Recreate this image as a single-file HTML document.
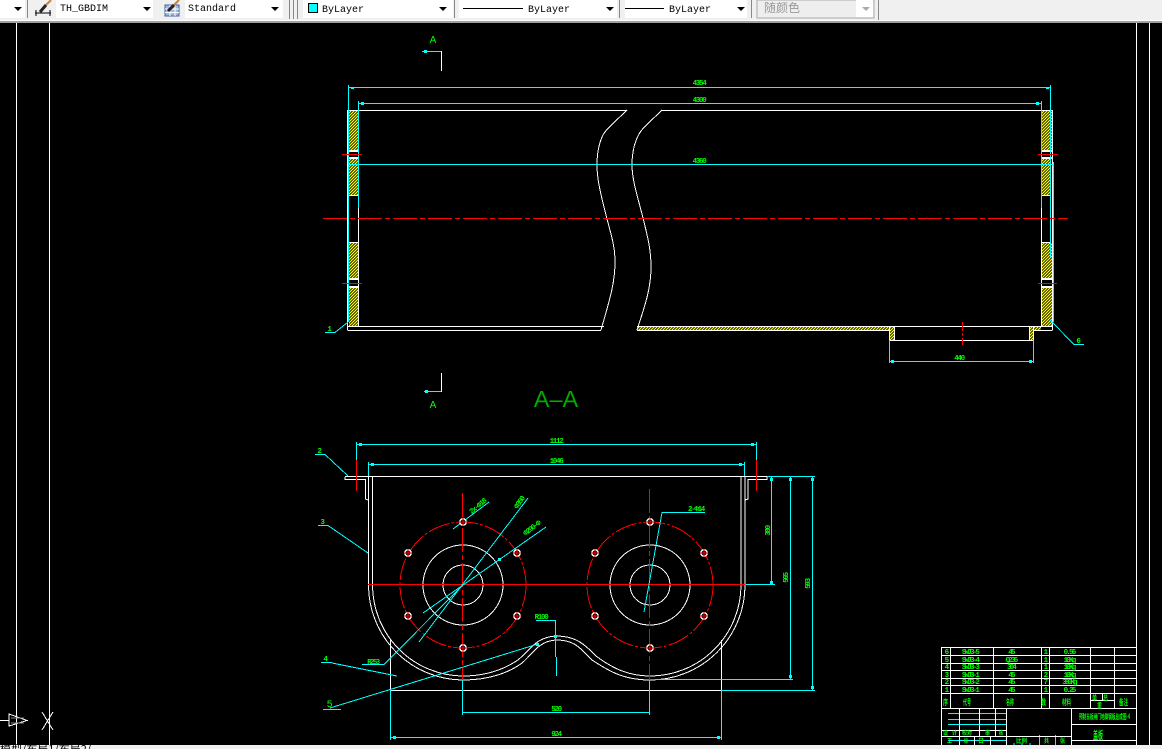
<!DOCTYPE html>
<html lang="zh"><head><meta charset="utf-8"><title>CAD</title>
<style>
html,body{margin:0;padding:0;background:#000;width:1162px;height:749px;overflow:hidden}
svg{display:block}
.t{font-family:"Liberation Mono","Noto Sans CJK SC",monospace;font-size:10px;fill:#000}
.g{font-family:"Liberation Mono",monospace;font-size:7.500px;font-weight:bold;fill:#0f0;text-anchor:middle;letter-spacing:-1.300px}
.s{font-family:"Liberation Mono",monospace;font-size:7.500px;font-weight:bold;fill:#0f0;text-anchor:middle;letter-spacing:-1.800px}
.k{font-family:"Noto Sans CJK SC",sans-serif;font-size:8px;font-weight:bold;fill:#0f0}
.w{stroke:#fff;fill:none}
.c{stroke:#0ff;fill:none}
.r{stroke:#f00;fill:none}
</style></head><body>
<svg width="1162" height="749" viewBox="0 0 1162 749" xmlns="http://www.w3.org/2000/svg">
<defs>
<pattern id="h" width="3" height="3" patternUnits="userSpaceOnUse"><rect width="3" height="3" fill="#000"/><path d="M0 3L3 0M-1 1L1 -1M2 4L4 2" stroke="#ff0" stroke-width="1.300"/></pattern>
</defs>
<!-- toolbar -->
<rect width="1162" height="23" fill="#f0f0f0"/>
<rect y="20" width="1162" height="1" fill="#fff"/>
<rect y="21" width="1162" height="2" fill="#a0a0a0"/>
<g fill="#fff">
<rect x="0" y="0" width="25" height="18"/><rect x="56" y="0" width="97" height="18"/><rect x="185" y="0" width="98" height="18"/><rect x="303" y="0" width="150" height="18"/><rect x="459" y="0" width="158" height="18"/><rect x="625" y="0" width="122" height="18"/>
</g>
<rect x="757" y="0" width="117" height="18" fill="#eee" stroke="#aaa"/>
<rect x="856" y="0" width="17" height="17" fill="#fff"/>
<g fill="#888"><rect x="27" y="0" width="1" height="18"/><rect x="289" y="0" width="1" height="19"/><rect x="293" y="0" width="1" height="19"/><rect x="297" y="0" width="1" height="19"/><rect x="454" y="0" width="1" height="18"/><rect x="619" y="0" width="1" height="18"/><rect x="751" y="0" width="1" height="18"/><rect x="878" y="0" width="1" height="20"/></g>
<g fill="#000">
<path d="M14 7h8l-4 4z"/><path d="M143 7h8l-4 4z"/><path d="M271 7h8l-4 4z"/><path d="M439 7h8l-4 4z"/><path d="M606 7h8l-4 4z"/><path d="M737 7h8l-4 4z"/>
</g>
<path d="M862 7h8l-4 4z" fill="#aaa"/>
<!-- dim style icon -->
<path d="M35 13H51M36 10V16M50 10V16" stroke="#000" fill="none"/>
<path d="M40 12L46 5" stroke="#222" stroke-width="3"/><path d="M46 5L51 0" stroke="#d08030" stroke-width="2"/>
<!-- table style icon -->
<rect x="165" y="5" width="14" height="11" fill="#9fb8e0" stroke="#4060a0"/>
<path d="M165 9H179M165 12.500H179M170 5V16M175 5V16" stroke="#fff"/>
<path d="M168 11L174 5" stroke="#222" stroke-width="3"/><path d="M174 5L179 0" stroke="#d08030" stroke-width="2"/>
<text class="t" x="60" y="11">TH_GBDIM</text>
<text class="t" x="188" y="11">Standard</text>
<rect x="308.500" y="3.500" width="9" height="9" fill="#0ff" stroke="#000"/>
<text class="t" x="322" y="12">ByLayer</text>
<path d="M463 8.500H523M625 8.500H664" stroke="#000"/>
<text class="t" x="528" y="12">ByLayer</text>
<text class="t" x="669" y="12">ByLayer</text>
<text x="764" y="12" style="font-family:'Noto Sans CJK SC',sans-serif;font-size:12px;fill:#999">随颜色</text>

<g shape-rendering="crispEdges" stroke-width="1">
<!-- outer frame -->
<path class="w" d="M16.500 23V745M49.500 23V745M1136.500 23V745M1149.500 23V745"/>
<!-- UCS -->
<path class="w" d="M0 720.500H9M9 714V726L27 720.500Z"/>
<path d="M11 718H24M11 723H24" stroke="#888" fill="none"/>
<path class="w" d="M42 712L53 730M53 712L42 730"/>

<!-- section marks -->
<path class="c" d="M422 51.500H441"/><path class="w" d="M441.500 51V71M441.500 373V392"/><path class="c" d="M424 391.500H441"/>
<rect x="424" y="50" width="3" height="3" fill="#0ff"/><rect x="425" y="390" width="3" height="3" fill="#0ff"/>
</g>
<text x="433" y="43" style="font-family:'Liberation Sans',sans-serif;font-size:10px;fill:#0f0;text-anchor:middle">A</text>
<text x="433" y="408" style="font-family:'Liberation Sans',sans-serif;font-size:10px;fill:#0f0;text-anchor:middle">A</text>
<text x="556" y="407" style="font-family:'Liberation Sans',sans-serif;font-size:23.500px;fill:#0a0;text-anchor:middle">A–A</text>

<!-- upper view -->
<g shape-rendering="crispEdges">
<g fill="url(#h)">
<rect x="349" y="111" width="9" height="40"/><rect x="349" y="158" width="9" height="37"/><rect x="349" y="243" width="9" height="36"/><rect x="349" y="288" width="9" height="38"/>
<rect x="1042" y="111" width="10" height="40"/><rect x="1042" y="158" width="8" height="37"/><rect x="1042" y="243" width="10" height="36"/><rect x="1042" y="288" width="10" height="38"/>
<rect x="637" y="327" width="252" height="3"/><rect x="890" y="327" width="4" height="13"/><rect x="1029" y="327" width="4" height="13"/><rect x="1033" y="327" width="8" height="3"/>
</g>
<path class="w" d="M347.500 110V330.500M358.500 208V326M1041.500 208V326M1052.500 110V330.500"/>
<path class="w" d="M347 110.500H627M662 110.500H1052M348 326.500H604M348 330.500H601M637 326.500H1052M637 330.500H890M1033 330.500H1052"/>
<path class="w" stroke-width="2" d="M348 151H358M348 158H358M348 279H358M348 287H358M1042 151H1052M1042 158H1052M1042 279H1052M1042 287H1052"/>
<path class="w" d="M348 195.500H358M348 242.500H358M1042 195.500H1050M1042 242.500H1050"/>
<path class="w" d="M894.500 326V340M1029.500 326V340M889.500 326V340M1033.500 326V340M890 340.500H1033"/>
<path class="w" d="M627 110C615 122 607 128 603 135C598 145 597 155 597 165C597 180 601 195 606 215C611 235 615 245 615 262C615 285 608 305 601 330"/>
<path class="w" d="M662 110C650 122 643 127 639 134C634 143 632 155 632 165C632 180 638 198 643 218C648 238 651 250 651 267C651 290 644 308 637 330"/>
<path class="c" d="M348.500 85V322M358.500 101V208M1050.500 85V257M1041.500 101V208M1053.500 162V322M889.500 340V363M1033.500 340V363"/>
<path class="c" d="M349 87.500H1050M359 103.500H1041M349 164.500H1053M890 361.500H1033"/>
<path class="c" d="M348 322L335 332.500H325M1050 320L1074 344.500H1084"/>
<path class="r" d="M323 218.500H1068" stroke-dasharray="24 3 5 3"/>
<path class="r" d="M342 154.500H362M342 283.500H362M1038 154.500H1058M1038 283.500H1057"/>
<path class="r" d="M962.500 322V345" stroke-dasharray="9 2 3 2"/>
<g fill="#0ff"><rect x="351" y="87" width="3" height="2"/><rect x="361" y="102" width="3" height="3"/><rect x="1046" y="87" width="3" height="2"/><rect x="1036" y="102" width="3" height="3"/><rect x="891" y="360" width="3" height="3"/><rect x="1029" y="360" width="3" height="3"/></g>
</g>
<text class="g" x="699" y="85">4354</text>
<text class="g" x="699" y="102">4300</text>
<text class="g" x="699" y="163">4360</text>
<text class="g" x="959" y="360">440</text>
<text class="g" x="329" y="331">1</text>
<text class="g" x="1078" y="343">6</text>

<!-- lower view -->
<g shape-rendering="crispEdges">
<path class="w" d="M345 476.500H767"/>
<path class="w" d="M345 477V479.500H365.500V499L368 500M767 477V479.500H748V499L745 500"/>
<path class="w" d="M368.500 476V585A95 95 0 0 0 463 680C490 680 510 672 522 663C532 655 538 641 556 640C575 640 580 648 592 660C610 672 625 680 650 680A95 95 0 0 0 745 585V476"/>
<path class="w" d="M372.500 476V585A91 91 0 0 0 463 676C488 676 506 668 518 660C530 650 536 637 556 636C576 636 584 644 596 656C612 668 628 676 650 676A91 91 0 0 0 741 585V476"/>
<circle class="w" cx="463" cy="585" r="40"/><circle class="w" cx="463" cy="585" r="20"/>
<circle class="w" cx="650" cy="585" r="40"/><circle class="w" cx="650" cy="585" r="20"/>
<circle class="r" cx="463" cy="585" r="63" stroke-dasharray="22 2 3 2"/>
<circle class="r" cx="650" cy="585" r="63" stroke-dasharray="22 2 3 2"/>
<path class="r" d="M368 584.500H745"/>
<path class="r" d="M462.500 493V680M649.500 489V680" stroke-dasharray="24 3 5 3"/>
<path class="r" d="M356.500 460V491M756.500 460V491"/>
<path class="w" d="M390.500 640V690M721.500 640V690M390 690.500H721"/>
<path class="c" d="M721 690.500H815M746 584.500H775M767 476.500H815M655 679.500H793"/>
<path class="c" d="M771.500 476V585M790.500 476V679M812.500 476V690"/>
<path class="c" d="M356.500 442V460M756.500 442V460M368.500 462V476M744.500 462V476M356 444.500H756M368 464.500H744"/>
<path class="c" d="M462.500 680V715M649.500 680V715M463 712.500H649M390.500 690V740M721.500 690V740M390 737.500H721"/>
<path class="c" d="M315 454.500H325M325 454.500L348 476M318 525.500H328M328 525.500L368 553M321 662.500H332M332 663L397 676M323 709.500H341M330 708L538 644M362 664.500H384L463 585M423 613L546 527M419 642L528 498M453 529L489 502M536 620.500H555M555.500 620V657M556.500 657V676M705 512.500H662L644 612"/>
<g fill="#0ff"><rect x="359" y="443" width="3" height="3"/><rect x="371" y="463" width="3" height="3"/><rect x="751" y="443" width="3" height="3"/><rect x="739" y="463" width="3" height="3"/><rect x="393" y="736" width="3" height="3"/><rect x="717" y="736" width="3" height="3"/><rect x="770" y="478" width="3" height="3"/><rect x="770" y="581" width="3" height="3"/><rect x="789" y="478" width="3" height="3"/><rect x="789" y="675" width="3" height="3"/><rect x="811" y="478" width="3" height="3"/><rect x="811" y="686" width="3" height="3"/><rect x="498" y="558" width="3" height="3"/><rect x="536" y="643" width="3" height="3"/><rect x="554" y="635" width="3" height="3"/></g>
</g>
<g fill="#000" stroke="#fff" stroke-width="1.500">
<circle cx="463" cy="522" r="3.200"/><circle cx="463" cy="648" r="3.200"/><circle cx="408" cy="553" r="3.200"/><circle cx="517" cy="553" r="3.200"/><circle cx="408" cy="616" r="3.200"/><circle cx="517" cy="616" r="3.200"/>
<circle cx="650" cy="522" r="3.200"/><circle cx="650" cy="648" r="3.200"/><circle cx="595" cy="553" r="3.200"/><circle cx="704" cy="553" r="3.200"/><circle cx="595" cy="616" r="3.200"/><circle cx="704" cy="616" r="3.200"/>
</g>
<path class="r" d="M459 522H467M463 518V526M459 648H467M463 644V652M404 553H412M408 549V557M513 553H521M517 549V557M404 616H412M408 612V620M513 616H521M517 612V620M646 522H654M650 518V526M646 648H654M650 644V652M591 553H599M595 549V557M700 553H708M704 549V557M591 616H599M595 612V620M700 616H708M704 612V620"/>
<text class="g" x="556" y="443">1112</text>
<text class="g" x="556" y="463">1046</text>
<text class="g" x="556" y="711">520</text>
<text class="g" x="556" y="736">924</text>
<text class="g" x="319" y="453">2</text>
<text class="g" x="322" y="524">3</text>
<text class="g" x="325" y="661">4</text>
<text class="g" x="329" y="707" style="font-size:10px;font-weight:normal">5</text>
<text class="g" x="373" y="664" style="font-size:7px">R253</text>
<text class="g" x="541" y="619">R100</text>
<text class="g" x="696" y="511">2-Φ14</text>
<text class="g" transform="translate(770 531) rotate(-90)">380</text>
<text class="g" transform="translate(788 578) rotate(-90)">565</text>
<text class="g" transform="translate(810 584) rotate(-90)">593</text>
<text class="g" transform="translate(479 508) rotate(-40)">2x-Φ18</text>
<text class="g" transform="translate(521 504) rotate(-55)">Φ350</text>
<text class="g" transform="translate(533 530) rotate(-38)">Φ290-Φ</text>

<!-- title block -->
<g shape-rendering="crispEdges">
<path class="c" d="M948 713.500H1006M948 719.500H1006M948 724.500H1006M948 740.500H1006M1014 745V743M1022 745V743M1030 745V743"/>
<path class="c" d="M1039.500 735V745M1055.500 735V745"/>
<path class="w" d="M941.500 647V745M950.500 647V708M993.500 647V708M1041.500 647V708M1049.500 647V708M1090.500 647V708M1114.500 647V708M1006.500 708V745M1071.500 708V745M959.500 708V745M979.500 708V736M995.500 708V736M974.500 736V745M990.500 736V745"/>
<path class="w" d="M941 647.500H1137M941 655.500H1137M941 663.500H1137M941 670.500H1137M941 678.500H1137M941 685.500H1137M941 693.500H1137M941 708.500H1137M1090 700.500H1114M1102.500 693V700M941 730.500H1006M941 736.500H1071M1071 724.500H1137M1071 740.500H1137"/>
</g>
<text class="s" x="946" y="654">6</text><text class="s" x="970" y="654">SWJ3-5</text><text class="s" x="1011" y="654">45</text><text class="s" x="1045" y="654">1</text><text class="s" x="1069" y="654">0.56</text>
<text class="s" x="946" y="662">5</text><text class="s" x="970" y="662">SWJ3-4</text><text class="s" x="1011" y="662">Q235</text><text class="s" x="1045" y="662">1</text><text class="s" x="1069" y="662">10Kg</text>
<text class="s" x="946" y="669">4</text><text class="s" x="970" y="669">SWJ3-3</text><text class="s" x="1011" y="669">304</text><text class="s" x="1045" y="669">1</text><text class="s" x="1069" y="669">10Kg</text>
<text class="s" x="946" y="677">3</text><text class="s" x="970" y="677">SWJ3-1</text><text class="s" x="1011" y="677">45</text><text class="s" x="1045" y="677">2</text><text class="s" x="1069" y="677">10Kg</text>
<text class="s" x="946" y="684">2</text><text class="s" x="970" y="684">SWJ3-2</text><text class="s" x="1011" y="684">45</text><text class="s" x="1045" y="684">7</text><text class="s" x="1069" y="684">380Kg</text>
<text class="s" x="946" y="692">1</text><text class="s" x="970" y="692">SWJ3-1</text><text class="s" x="1011" y="692">45</text><text class="s" x="1045" y="692">1</text><text class="s" x="1069" y="692">0.25</text>
<text class="k" x="943" y="705" textLength="5" lengthAdjust="spacingAndGlyphs">序</text>
<text class="k" x="963" y="705" textLength="8" lengthAdjust="spacingAndGlyphs">代号</text>
<text class="k" x="1006" y="705" textLength="8" lengthAdjust="spacingAndGlyphs">名称</text>
<text class="k" x="1041" y="705" textLength="5" lengthAdjust="spacingAndGlyphs">数</text>
<text class="k" x="1062" y="705" textLength="9" lengthAdjust="spacingAndGlyphs">材料</text>
<text class="k" x="1119" y="705" textLength="9" lengthAdjust="spacingAndGlyphs">备注</text>
<text class="k" x="1092" y="700" textLength="5" lengthAdjust="spacingAndGlyphs" style="font-size:7px">单</text>
<text class="k" x="1103" y="700" textLength="5" lengthAdjust="spacingAndGlyphs" style="font-size:7px">总</text>
<text class="k" x="1097" y="708" textLength="5" lengthAdjust="spacingAndGlyphs" style="font-size:7px">重</text>
<text class="k" x="1079" y="719" textLength="51" lengthAdjust="spacingAndGlyphs" style="font-size:7px">预制五板闸门地脚钢板总成图-4</text>
<text class="k" x="1093" y="739" textLength="10" lengthAdjust="spacingAndGlyphs" style="font-size:11px">盖板</text>
<text class="k" x="943" y="735" textLength="5" lengthAdjust="spacingAndGlyphs" style="font-size:6px">设</text>
<text class="k" x="952" y="735" textLength="5" lengthAdjust="spacingAndGlyphs" style="font-size:6px">计</text>
<text class="k" x="962" y="735" textLength="10" lengthAdjust="spacingAndGlyphs" style="font-size:6px">校对</text>
<text class="k" x="985" y="735" textLength="5" lengthAdjust="spacingAndGlyphs" style="font-size:6px">审</text>
<text class="k" x="999" y="735" textLength="4" lengthAdjust="spacingAndGlyphs" style="font-size:6px">核</text>
<text class="k" x="947" y="743" textLength="5" lengthAdjust="spacingAndGlyphs" style="font-size:6px">工</text>
<text class="k" x="964" y="743" textLength="4" lengthAdjust="spacingAndGlyphs" style="font-size:6px">标</text>
<text class="k" x="978" y="743" textLength="6" lengthAdjust="spacingAndGlyphs" style="font-size:6px">日</text>
<text class="k" x="1016" y="743" textLength="11" lengthAdjust="spacingAndGlyphs" style="font-size:6px">比例</text>
<text class="k" x="1044" y="743" textLength="5" lengthAdjust="spacingAndGlyphs" style="font-size:6px">共</text>
<text class="k" x="1060" y="743" textLength="5" lengthAdjust="spacingAndGlyphs" style="font-size:6px">张</text>

<!-- status/tab strip -->
<rect y="745" width="1162" height="4" fill="#f0f0f0"/>
<text x="0" y="753" style="font-family:'Noto Sans CJK SC',sans-serif;font-size:11px;fill:#000">模型/布局1/布局2/</text>
</svg>
</body></html>
